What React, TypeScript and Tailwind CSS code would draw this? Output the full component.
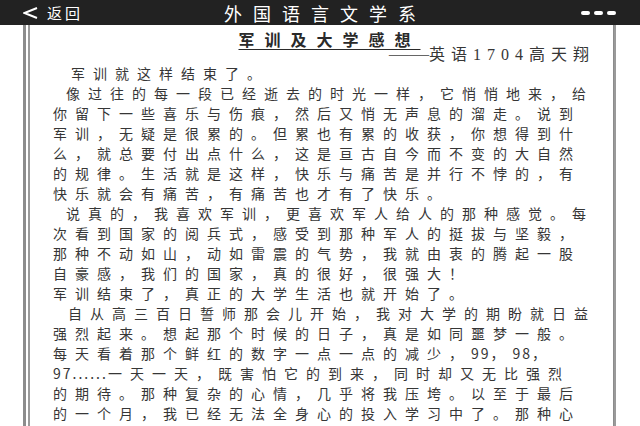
import React from 'react';

const cjk = '"Noto Sans CJK SC", "Noto Sans", sans-serif';
const serif = '"Liberation Serif", serif';

type Line = { text: React.ReactNode; indent?: string };

const lines: Line[] = [
  { text: '军训就这样结束了。', indent: 'pl-[18px]' },
  { text: '像过往的每一段已经逝去的时光一样，它悄悄地来，给', indent: 'pl-[13px]' },
  { text: '你留下一些喜乐与伤痕，然后又悄无声息的溜走。说到' },
  { text: '军训，无疑是很累的。但累也有累的收获，你想得到什' },
  { text: '么，就总要付出点什么，这是亘古自今而不变的大自然' },
  { text: '的规律。生活就是这样，快乐与痛苦是并行不悖的，有' },
  { text: '快乐就会有痛苦，有痛苦也才有了快乐。' },
  { text: '说真的，我喜欢军训，更喜欢军人给人的那种感觉。每', indent: 'pl-[13px]' },
  { text: '次看到国家的阅兵式，感受到那种军人的挺拔与坚毅，' },
  { text: '那种不动如山，动如雷震的气势，我就由衷的腾起一股' },
  { text: '自豪感，我们的国家，真的很好，很强大！' },
  { text: '军训结束了，真正的大学生活也就开始了。' },
  { text: '自从高三百日誓师那会儿开始，我对大学的期盼就日益', indent: 'pl-[15px]' },
  { text: '强烈起来。想起那个时候的日子，真是如同噩梦一般。' },
  {
    text: (
      <>
        每天看着那个鲜红的数字一点一点的减少，<span className="tracking-[2px]">99</span>，
        <span className="tracking-[2px]">98</span>，
      </>
    ),
  },
  {
    text: (
      <>
        <span className="tracking-[2px]">97......</span>一天一天，既害怕它的到来，同时却又无比强烈
      </>
    ),
  },
  { text: '的期待。那种复杂的心情，几乎将我压垮。以至于最后' },
  { text: '的一个月，我已经无法全身心的投入学习中了。那种心' },
];

function TopBar() {
  return (
    <div className="h-[25px] shrink-0 bg-[#222222] flex items-center px-[23px] text-white">
      <div className="w-[120px] flex items-center">
        <svg width="15" height="12" viewBox="0 0 15 12" className="shrink-0">
          <polyline points="14,1 1.5,6 14,11" fill="none" stroke="white" strokeWidth="2" />
        </svg>
        <span className="ml-[9px] text-[15px] leading-none tracking-[3px]">返回</span>
      </div>
      <div className="flex-1 text-center text-[18px] leading-none tracking-[11px] pl-[11px]">外国语言文学系</div>
      <div className="w-[120px] flex justify-end items-center gap-[4px] pr-[1px]">
        <div className="w-[9px] h-[4px] rounded-full bg-white" />
        <div className="w-[9px] h-[4px] rounded-full bg-white" />
        <div className="w-[9px] h-[4px] rounded-full bg-white" />
      </div>
    </div>
  );
}

export default function App() {
  return (
    <div className="w-full h-[426px] overflow-hidden bg-white flex flex-col" style={{ fontFamily: cjk }}>
      <TopBar />
      <div className="flex-1 ml-[23px] mr-[24px] border-x-[3px] border-[#8c8c8c] px-[2px] flex">
        <div className="flex-1 border-x-2 border-[#9a9a9a] pl-[23px] pr-[18px] pt-[6px] text-[#363636]">
          {/* heading */}
          <div className="h-[16px] flex justify-center items-center">
            <span className="text-[16px] leading-[16px] font-bold tracking-[10px] underline underline-offset-[3px] decoration-1 text-[#2a2a2a] pl-[10px]">
              军训及大学感想
            </span>
          </div>
          {/* byline */}
          <div className="h-[14px] mb-[2px] flex justify-end items-center pr-[1px] whitespace-nowrap">
            <span className="text-[20px] leading-[14px] text-[#666]" style={{ fontFamily: serif }}>
              ——
            </span>
            <span className="text-[16px] leading-[14px] tracking-[6px]">
              英语<span style={{ fontFamily: serif }}>1704</span>高天翔
            </span>
          </div>
          {lines.map((l, i) => (
            <div key={i} className={`text-[14px] leading-[20px] tracking-[8px] whitespace-nowrap ${l.indent ?? ''}`}>
              {l.text}
            </div>
          ))}
        </div>
      </div>
    </div>
  );
}
